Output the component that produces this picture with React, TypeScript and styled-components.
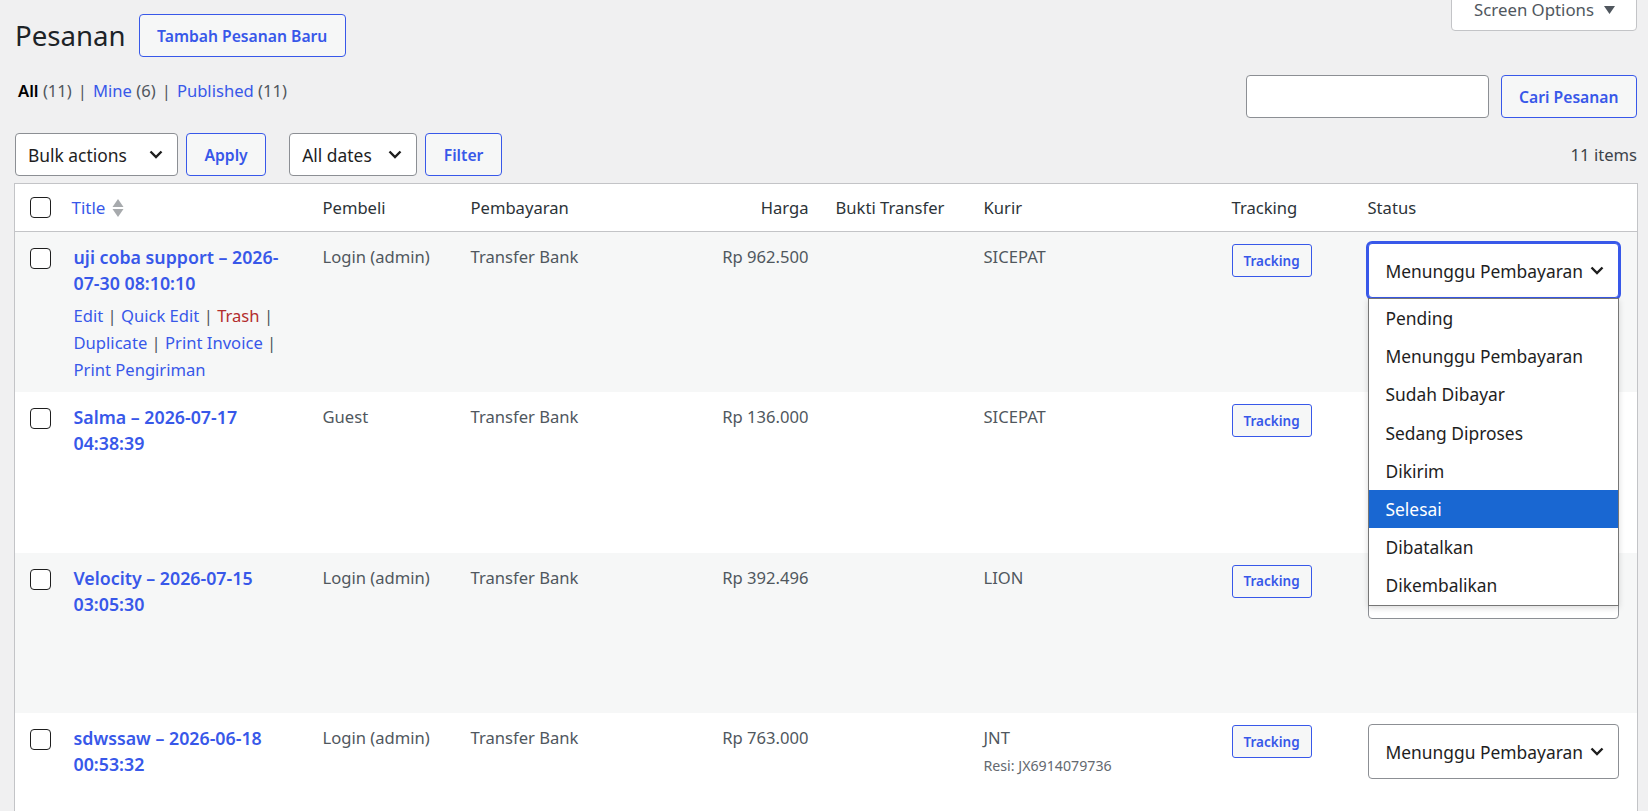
import styled, { createGlobalStyle } from "styled-components";

const blue = "#3858e9";
const font = `"Noto Sans", "Open Sans", sans-serif`;

const GlobalStyle = createGlobalStyle`
  html, body {
    margin: 0;
    height: 100%;
    overflow: hidden;
  }
  body {
    background: #f0f0f1;
    font-family: ${font};
    color: #3c434a;
    font-size: 16.6px;
  }
  * {
    box-sizing: border-box;
  }
`;

//#region layout
const Wrap = styled.div`
  margin: 0 11px 0 15px;
`;

const TopRow = styled.div`
  display: flex;
  align-items: flex-start;
  justify-content: space-between;
`;

const TitleGroup = styled.div`
  display: flex;
  align-items: center;
  gap: 13px;
  margin-top: 14px;
`;

const PageTitle = styled.h1`
  margin: 0;
  font-size: 27.6px;
  font-weight: 400;
  line-height: 43px;
  color: #1d2327;
`;

const ScreenTab = styled.div`
  display: flex;
  align-items: center;
  gap: 10px;
  margin-top: -1px;
  padding: 0 21px 10px 22px;
  line-height: 20px;
  background: #fff;
  border: 1px solid #c3c4c7;
  border-radius: 0 0 4px 4px;
  color: #50575e;
  font-size: 16.8px;
`;

const SubRow = styled.div`
  display: flex;
  align-items: flex-start;
  justify-content: space-between;
  margin-top: 18px;
`;

const Views = styled.div`
  margin-top: 2px;
  padding-left: 3px;
  line-height: 27px;
  color: #646970;
`;

const ViewLink = styled.span<{ $current?: boolean }>`
  color: ${({ $current }) => ($current ? "#000" : blue)};
  font-weight: ${({ $current }) => ($current ? 600 : 400)};
`;

const Count = styled.span`
  color: #50575e;
`;

const Sep = styled.span`
  color: #50575e;
  margin: 0 6px;
`;

const SearchBox = styled.div`
  display: flex;
  gap: 12px;
`;

const SearchInput = styled.input`
  width: 243px;
  height: 43px;
  border: 1px solid #8c8f94;
  border-radius: 4px;
  background: #fff;
  margin: 0;
`;

const Button = styled.button<{ $small?: boolean }>`
  height: ${({ $small }) => ($small ? 33 : 43)}px;
  padding: 0 ${({ $small }) => ($small ? 11 : 17.5)}px;
  border: 1px solid ${blue};
  border-radius: ${({ $small }) => ($small ? 3 : 4)}px;
  background: #f6f7f7;
  color: ${blue};
  font-family: ${font};
  font-size: ${({ $small }) => ($small ? 13.5 : 15.7)}px;
  font-weight: 600;
  white-space: nowrap;
  cursor: pointer;
`;

const TableNav = styled.div`
  display: flex;
  align-items: center;
  gap: 23px;
  height: 43px;
  margin: 15px 0 7px;
`;

const Group = styled.div`
  display: flex;
  gap: 8px;
`;

const ItemsCount = styled.div`
  margin-left: auto;
  color: #3c434a;
  font-size: 16.6px;
`;

const SelectBox = styled.div<{ $width: number; $height: number; $focused?: boolean; $padLeft: number }>`
  display: flex;
  align-items: center;
  justify-content: space-between;
  width: ${({ $width }) => $width}px;
  height: ${({ $height }) => $height}px;
  padding: 0 14px 0 ${({ $padLeft }) => $padLeft}px;
  background: #fff;
  border: 1px solid ${({ $focused }) => ($focused ? blue : "#8c8f94")};
  border-radius: 4px;
  color: #1e1e1e;
  font-size: 17.4px;
  white-space: nowrap;
  ${({ $focused }) => $focused && `box-shadow: 0 0 0 2px ${blue};`}
`;
//#endregion

//#region table
const Table = styled.table`
  width: calc(100% + 1px);
  margin-left: -1px;
  border-collapse: collapse;
  table-layout: fixed;
  background: #fff;
  border: 1px solid #c3c4c7;
`;

const Col = styled.col<{ $w: number }>`
  width: ${({ $w }) => $w}px;
`;

const Th = styled.th<{ $right?: boolean; $sort?: boolean }>`
  height: 48px;
  padding: 0 ${({ $right }) => ($right ? 17 : 10)}px 0 ${({ $sort }) => ($sort ? 8 : 10)}px;
  text-align: ${({ $right }) => ($right ? "right" : "left")};
  font-weight: 400;
  font-size: 16.6px;
  color: #2c3338;
  border-bottom: 1px solid #c3c4c7;
  vertical-align: middle;
`;

const CheckTh = styled.th`
  padding: 0 0 0 15px;
  border-bottom: 1px solid #c3c4c7;
  vertical-align: middle;
`;

const SortLink = styled.span`
  display: inline-flex;
  align-items: center;
  gap: 7px;
  color: ${blue};
  font-size: 17px;
`;

const Row = styled.tr<{ $striped: boolean }>`
  background: ${({ $striped }) => ($striped ? "#f6f7f7" : "#fff")};
`;

const Td = styled.td<{ $right?: boolean }>`
  padding: 12px ${({ $right }) => ($right ? 17 : 10)}px 9.4px 10px;
  vertical-align: top;
  text-align: ${({ $right }) => ($right ? "right" : "left")};
  line-height: 26px;
  font-size: 16.6px;
  color: #50575e;
`;

const CheckTd = styled.td`
  padding: 16px 0 0 15px;
  vertical-align: top;
`;

const StatusTd = styled.td`
  padding: 11px 10px 0 10px;
  vertical-align: top;
`;

const Checkbox = styled.span`
  display: block;
  width: 21px;
  height: 21px;
  border: 1px solid #1e1e1e;
  border-radius: 4px;
  background: #fff;
`;

const RowTitle = styled.strong`
  display: block;
  color: ${blue};
  font-weight: 600;
  font-size: 17.8px;
  line-height: 26px;
`;

const RowActions = styled.div<{ $visible: boolean }>`
  margin-top: 6px;
  line-height: 27px;
  color: #50575e;
  visibility: ${({ $visible }) => ($visible ? "visible" : "hidden")};
`;

const ActionLink = styled.span<{ $danger?: boolean }>`
  color: ${({ $danger }) => ($danger ? "#b32d2e" : blue)};
`;

const Resi = styled.div`
  margin-top: 2px;
  font-size: 14.2px;
  color: #646970;
`;

const SelectWrap = styled.div`
  position: relative;
  width: 251px;
`;

const OptionList = styled.ul`
  position: absolute;
  top: 100%;
  left: 0;
  z-index: 10;
  width: 251px;
  margin: 0;
  padding: 0;
  list-style: none;
  background: #fff;
  border: 1px solid #767676;
  box-shadow: 0 2px 6px rgba(0, 0, 0, 0.15);
`;

const Option = styled.li<{ $active?: boolean }>`
  height: 38.2px;
  padding: 0 17px;
  line-height: 38.2px;
  font-size: 17.4px;
  color: ${({ $active }) => ($active ? "#fff" : "#1e1e1e")};
  background: ${({ $active }) => ($active ? "#1967d2" : "transparent")};
`;
//#endregion

function Chevron() {
  return (
    <svg width="14" height="9" viewBox="0 0 14 9">
      <path d="M1.5 1.5 L7 7 L12.5 1.5" fill="none" stroke="#1e1e1e" strokeWidth="2.4" />
    </svg>
  );
}

function SortIcon() {
  return (
    <svg width="12" height="20" viewBox="0 0 12 20">
      <path d="M6 1 L11.5 9 L0.5 9 Z" fill="#a7aaad" />
      <path d="M0.5 11 L11.5 11 L6 19 Z" fill="#a7aaad" />
    </svg>
  );
}

function Caret() {
  return (
    <svg width="11" height="8" viewBox="0 0 11 8">
      <path d="M0 0 L11 0 L5.5 8 Z" fill="#50575e" />
    </svg>
  );
}

const statuses = [
  "Pending",
  "Menunggu Pembayaran",
  "Sudah Dibayar",
  "Sedang Diproses",
  "Dikirim",
  "Selesai",
  "Dibatalkan",
  "Dikembalikan",
];

type Order = {
  title: string;
  buyer: string;
  price: string;
  courier: string;
  resi?: string;
};

const orders: Order[] = [
  { title: "uji coba support – 2026-07-30 08:10:10", buyer: "Login (admin)", price: "Rp 962.500", courier: "SICEPAT" },
  { title: "Salma – 2026-07-17 04:38:39", buyer: "Guest", price: "Rp 136.000", courier: "SICEPAT" },
  { title: "Velocity – 2026-07-15 03:05:30", buyer: "Login (admin)", price: "Rp 392.496", courier: "LION" },
  { title: "sdwssaw – 2026-06-18 00:53:32", buyer: "Login (admin)", price: "Rp 763.000", courier: "JNT", resi: "JX6914079736" },
];

const widths = [49, 249, 148, 179, 186, 148, 248, 136, 280];

export default function App() {
  return (
    <>
      <GlobalStyle />
      <Wrap>
        <TopRow>
          <TitleGroup>
            <PageTitle>Pesanan</PageTitle>
            <Button>Tambah Pesanan Baru</Button>
          </TitleGroup>
          <ScreenTab>
            Screen Options <Caret />
          </ScreenTab>
        </TopRow>

        <SubRow>
          <Views>
            <ViewLink $current>All</ViewLink> <Count>(11)</Count>
            <Sep>|</Sep>
            <ViewLink>Mine</ViewLink> <Count>(6)</Count>
            <Sep>|</Sep>
            <ViewLink>Published</ViewLink> <Count>(11)</Count>
          </Views>
          <SearchBox>
            <SearchInput type="search" />
            <Button>Cari Pesanan</Button>
          </SearchBox>
        </SubRow>

        <TableNav>
          <Group>
            <SelectBox $width={163} $height={43} $padLeft={12}>
              Bulk actions <Chevron />
            </SelectBox>
            <Button>Apply</Button>
          </Group>
          <Group>
            <SelectBox $width={128} $height={43} $padLeft={12}>
              All dates <Chevron />
            </SelectBox>
            <Button>Filter</Button>
          </Group>
          <ItemsCount>11 items</ItemsCount>
        </TableNav>

        <Table>
          <colgroup>
            {widths.map((w, i) => (
              <Col key={i} $w={w} />
            ))}
          </colgroup>
          <thead>
            <tr>
              <CheckTh>
                <Checkbox />
              </CheckTh>
              <Th $sort>
                <SortLink>
                  Title <SortIcon />
                </SortLink>
              </Th>
              <Th>Pembeli</Th>
              <Th>Pembayaran</Th>
              <Th $right>Harga</Th>
              <Th>Bukti Transfer</Th>
              <Th>Kurir</Th>
              <Th>Tracking</Th>
              <Th>Status</Th>
            </tr>
          </thead>
          <tbody>
            {orders.map((o, i) => (
              <Row key={o.title} $striped={i % 2 === 0}>
                <CheckTd>
                  <Checkbox />
                </CheckTd>
                <Td>
                  <RowTitle>{o.title}</RowTitle>
                  <RowActions $visible={i === 0}>
                    <ActionLink>Edit</ActionLink> | <ActionLink>Quick Edit</ActionLink> |{" "}
                    <ActionLink $danger>Trash</ActionLink> | <ActionLink>Duplicate</ActionLink> |{" "}
                    <ActionLink>Print Invoice</ActionLink> | <ActionLink>Print Pengiriman</ActionLink>
                  </RowActions>
                </Td>
                <Td>{o.buyer}</Td>
                <Td>Transfer Bank</Td>
                <Td $right>{o.price}</Td>
                <Td />
                <Td>
                  {o.courier}
                  {o.resi && <Resi>Resi: {o.resi}</Resi>}
                </Td>
                <Td>
                  <Button $small>Tracking</Button>
                </Td>
                <StatusTd>
                  <SelectWrap>
                    <SelectBox $width={251} $height={55} $padLeft={17} $focused={i === 0}>
                      Menunggu Pembayaran <Chevron />
                    </SelectBox>
                    {i === 0 && (
                      <OptionList>
                        {statuses.map((s) => (
                          <Option key={s} $active={s === "Selesai"}>
                            {s}
                          </Option>
                        ))}
                      </OptionList>
                    )}
                  </SelectWrap>
                </StatusTd>
              </Row>
            ))}
          </tbody>
        </Table>
      </Wrap>
    </>
  );
}
